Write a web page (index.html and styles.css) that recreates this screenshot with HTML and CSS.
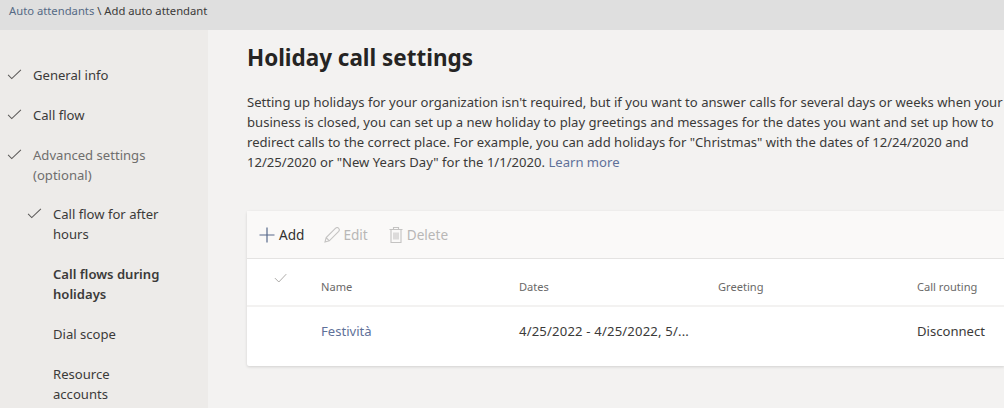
FILE: index.html
```html
<!DOCTYPE html>
<html lang="en">
<head>
<meta charset="utf-8">
<title>Add auto attendant</title>
<link rel="stylesheet" href="styles.css">
</head>
<body>
<div class="page">
  <header class="crumbs"><a class="crumb-link">Auto attendants</a> \ Add auto attendant</header>
  <div class="body">
    <nav class="side">
      <div class="step done"><svg class="check" viewBox="0 0 16 12"><path d="M1 6.5 L5 10.5 L15 1"/></svg><span>General info</span></div>
      <div class="step done"><svg class="check" viewBox="0 0 16 12"><path d="M1 6.5 L5 10.5 L15 1"/></svg><span>Call flow</span></div>
      <div class="step done muted"><svg class="check" viewBox="0 0 16 12"><path d="M1 6.5 L5 10.5 L15 1"/></svg><span>Advanced settings (optional)</span></div>
      <div class="step sub first done"><svg class="check" viewBox="0 0 16 12"><path d="M1 6.5 L5 10.5 L15 1"/></svg><span>Call flow for after hours</span></div>
      <div class="step sub current"><span>Call flows during holidays</span></div>
      <div class="step sub"><span>Dial scope</span></div>
      <div class="step sub"><span>Resource accounts</span></div>
    </nav>
    <main class="main">
      <h1 class="title">Holiday call settings</h1>
      <p class="intro">Setting up holidays for your organization isn't required, but if you want to answer calls for several days or weeks when your<br>business is closed, you can set up a new holiday to play greetings and messages for the dates you want and set up how to<br>redirect calls to the correct place. For example, you can add holidays for "Christmas" with the dates of 12/24/2020 and<br>12/25/2020 or "New Years Day" for the 1/1/2020. <a class="link">Learn more</a></p>
      <section class="card">
        <div class="toolbar">
          <div class="tool"><svg class="ico ico-add" viewBox="0 0 16 16"><path class="plus" d="M8 0.5 V15.5 M0.5 8 H15.5"/></svg><span>Add</span></div>
          <div class="tool off"><svg class="ico" viewBox="0 0 16 16"><path class="dim" d="M1 15 L2.2 10.6 L11.6 1.2 C12.6 .4 13.8 .4 14.6 1.3 C15.5 2.2 15.5 3.4 14.7 4.3 L5.3 13.8 Z M2.2 10.6 L5.3 13.8"/></svg><span>Edit</span></div>
          <div class="tool off"><svg class="ico" viewBox="0 0 16 16"><path class="dim" d="M1.5 2.5 H14.5 M5.5 2.5 V0.5 H10.5 V2.5 M3 2.5 V15.5 H13 V2.5 M6 5.5 V12.5 M8 5.5 V12.5 M10 5.5 V12.5"/></svg><span>Delete</span></div>
        </div>
        <div class="row head">
          <div class="c-check"><svg class="hcheck" viewBox="0 0 16 12"><path d="M1 5.5 L5.5 10 L14 1"/></svg></div>
          <div class="c-name">Name</div>
          <div class="c-col">Dates</div>
          <div class="c-col">Greeting</div>
          <div class="c-col">Call routing</div>
        </div>
        <div class="row item">
          <div class="c-check"></div>
          <div class="c-name"><a class="link">Festività</a></div>
          <div class="c-col c-dates">4/25/2022 - 4/25/2022, 5/...</div>
          <div class="c-col"></div>
          <div class="c-col">Disconnect</div>
        </div>
      </section>
    </main>
  </div>
</div>
</body>
</html>
```
FILE: styles.css
```css
* { box-sizing: border-box; }
html, body { margin: 0; padding: 0; height: 100%; overflow: hidden; }
body { font-family: "Noto Sans", "Open Sans", sans-serif; font-size: 13.08px; line-height: 20px; color: #323130; background: #f3f2f1; }
.page { width: 1004px; height: 408px; display: flex; flex-direction: column; overflow: hidden; }
.crumbs { height: 30px; flex: none; background: #dfdfdf; padding: 1px 0 0 9px; font-size: 11.25px; line-height: 20px; color: #3b3a39; }
.crumb-link { color: #566a85; }
.body { flex: 1; display: flex; min-height: 0; }
.side { width: 208px; flex: none; background: #edebe9; padding-top: 35px; display: flex; flex-direction: column; gap: 20px; color: #3b3a39; }
.step { position: relative; padding: 0 30px 0 33px; }
.step.sub { padding-left: 53px; padding-right: 46px; }
.step.first { margin-top: -1px; }
.muted { color: #6f6e6d; }
.current { font-weight: 600; }
.check { position: absolute; left: 7px; top: 4px; width: 15px; height: 11px; }
.sub .check { left: 27px; }
.check path { fill: none; stroke: #5a5857; stroke-width: 1.1; }
.main { flex: 1; padding: 0 0 0 39px; min-width: 0; }
.title { margin: 12px 0 0; font-size: 22.45px; line-height: 32px; font-weight: 700; color: #252423; }
.intro { margin: 18px 0 0; white-space: nowrap; color: #3b3a39; }
.link { color: #5f7199; }
.card { margin-top: 39px; background: #fff; border-radius: 2px 0 0 2px; box-shadow: 0 1px 3px rgba(0,0,0,.14); }
.toolbar { height: 48px; background: #faf9f8; border-bottom: 1px solid #e4e3e2; display: flex; align-items: center; padding-left: 12px; gap: 20px; font-size: 13.6px; }
.tool { display: flex; align-items: center; gap: 3px; color: #323130; }
.tool.off { color: #b8b7b6; }
.ico { width: 16px; height: 16px; }
.ico-add { margin-right: 1px; }
.plus { fill: none; stroke: #56688a; stroke-width: 1.2; }
.dim { fill: none; stroke: #c4c3c2; stroke-width: 1.1; }
.row { display: grid; grid-template-columns: 74px 198px 199px 199px 1fr; align-items: center; }
.head { height: 48px; border-bottom: 2px solid #f3f2f1; padding-top: 9px; font-size: 11.1px; color: #6a6968; }
.item { height: 59px; padding-bottom: 12px; color: #3b3a39; }
.c-dates { letter-spacing: .18px; }
.c-check { padding-left: 27px; }
.hcheck { display: block; width: 14px; height: 11px; margin-top: -14px; }
.hcheck path { fill: none; stroke: #a19f9d; stroke-width: 1; }
```
